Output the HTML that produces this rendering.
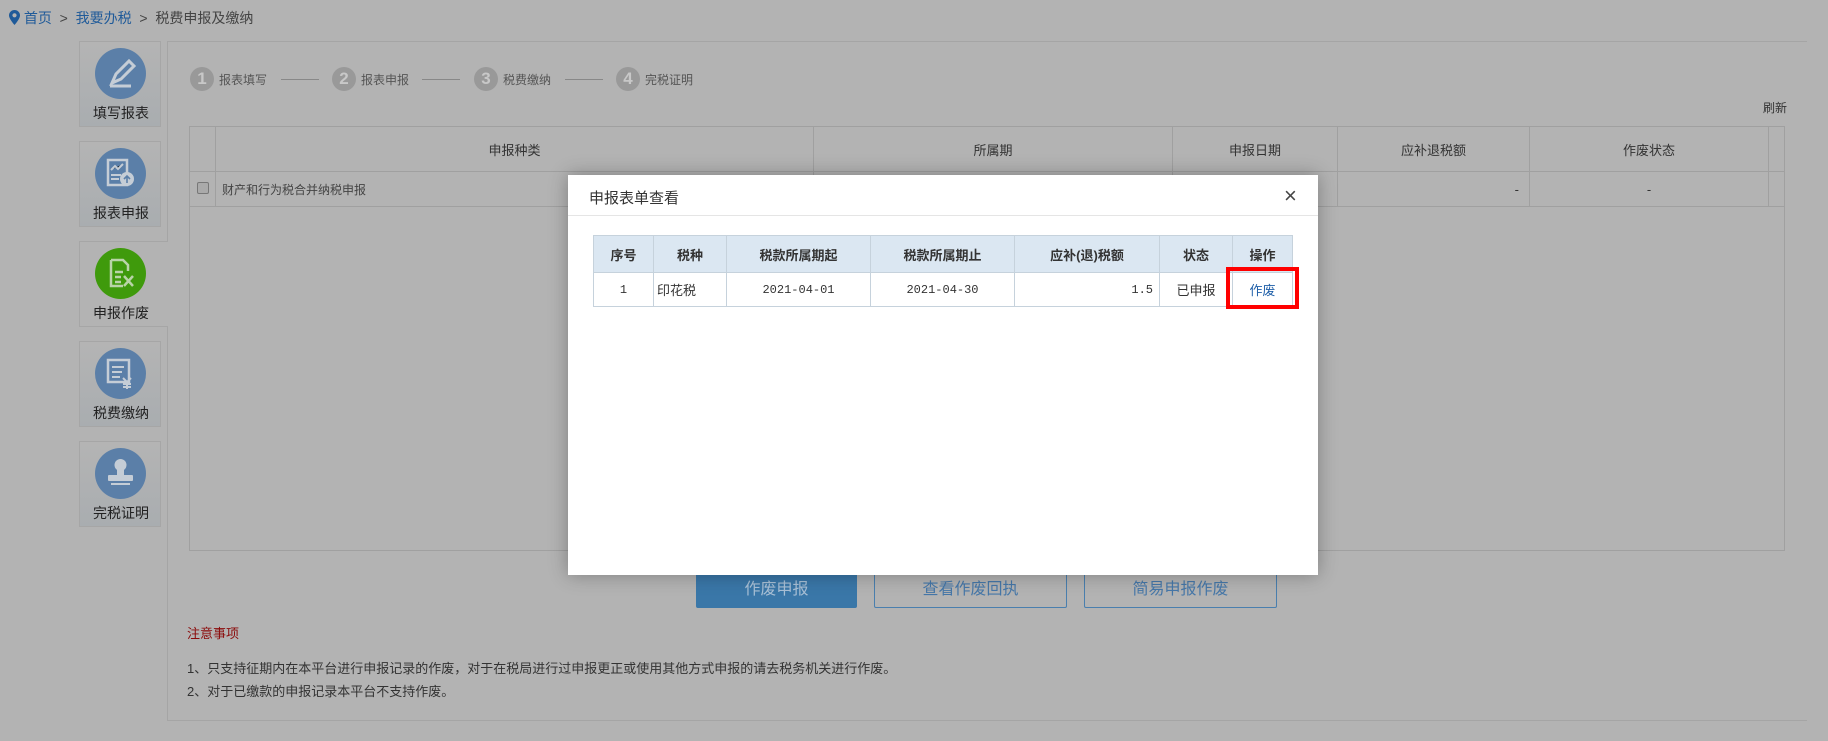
<!DOCTYPE html>
<html><head><meta charset="utf-8"><style>
*{margin:0;padding:0;box-sizing:border-box}
body{width:1828px;height:741px;background:#b3b3b3;font-family:"Liberation Sans","Noto Sans CJK SC",sans-serif;color:#333;position:relative;overflow:hidden;font-size:13px}
.a{position:absolute}
.crumb{top:8px;left:9px;font-size:14px;color:#444;white-space:nowrap}
.crumb b{font-weight:normal;color:#1f5a99}
.side{left:79px;width:82px;height:86px;border:1px solid #a6a6a6;background:linear-gradient(#b4b4b4,#a9adb0)}
.side.act{background:#b3b3b3;width:89px;border-right:none}
.side .c{position:absolute;left:15px;top:6px;width:51px;height:51px;border-radius:50%;background:#5b7fa8}
.side .t{position:absolute;left:0;width:82px;top:61px;text-align:center;font-size:14px;color:#222}
.panel{left:167px;top:41px;width:1640px;height:680px;border:1px solid #a5a5a5;border-right:none}
.step{top:67px;font-size:12px;color:#555;display:flex;align-items:center}
.step i{display:inline-block;width:24px;height:24px;border-radius:50%;background:#999;color:#c8c8c8;font-style:normal;font-weight:bold;font-size:17px;text-align:center;line-height:24px;margin-right:5px}
.line{top:79px;height:1px;background:#888;width:38px}
table{border-collapse:collapse}
.mt td{border:1px solid #a0a0a0;height:35px;text-align:center;font-size:13px}
.modal{left:568px;top:175px;width:750px;height:400px;background:#fff;box-shadow:0 0 18px rgba(0,0,0,.3)}
.it th,.it td{border:1px solid #c6d2dc;font-size:13px;text-align:center}
.it th{background:#dbe7f2;height:37px;color:#333}
.it td{height:34px;font-family:"Liberation Mono","Noto Sans CJK SC",monospace;font-size:12px}
.btn{top:571px;height:37px;font-size:16px;text-align:center;line-height:35px;border:1px solid #4a7fae;color:#4677a8;border-radius:2px}
</style></head><body>
<div class="a crumb"><svg width="11" height="15" viewBox="0 0 11 15" style="vertical-align:-2px"><path d="M5.5 0C2.5 0 0 2.4 0 5.4 0 9 5.5 15 5.5 15S11 9 11 5.4C11 2.4 8.5 0 5.5 0z" fill="#1f5a99"/><circle cx="5.5" cy="5.3" r="2.1" fill="#b3b3b3"/></svg> <b>首页</b> &nbsp;&gt;&nbsp; <b>我要办税</b> &nbsp;&gt;&nbsp; 税费申报及缴纳</div>

<div class="a panel"></div>
<div class="a side" style="top:41px"><div class="c"><svg width="51" height="51" viewBox="0 0 51 51"><path d="M17 35l4-9 13-13 5 5-13 13z" fill="none" stroke="#c5cdd6" stroke-width="3"/><path d="M15 38h21" stroke="#c5cdd6" stroke-width="3"/></svg></div><div class="t">填写报表</div></div>
<div class="a side" style="top:141px"><div class="c"><svg width="51" height="51" viewBox="0 0 51 51"><rect x="13" y="12" width="19" height="25" fill="none" stroke="#c5cdd6" stroke-width="2.5"/><path d="M16 22l4-4 3 3 5-5M16 27h10M16 31h8" stroke="#c5cdd6" stroke-width="2"/><circle cx="32" cy="31" r="7" fill="#c5cdd6"/><path d="M32 35v-7m-3 3l3-3 3 3" stroke="#5b7fa8" stroke-width="1.6" fill="none"/></svg></div><div class="t">报表申报</div></div>
<div class="a side act" style="top:241px"><div class="c" style="background:#3f9a0c"><svg width="51" height="51" viewBox="0 0 51 51"><path d="M16 12h12l5 5v6M16 12v26h12" fill="none" stroke="#b9d4a8" stroke-width="2.5"/><path d="M20 24h8M20 29h6M20 34h6M29 28l9 10M38 28l-9 10" stroke="#b9d4a8" stroke-width="2.5"/></svg></div><div class="t">申报作废</div></div>
<div class="a side" style="top:341px"><div class="c"><svg width="51" height="51" viewBox="0 0 51 51"><rect x="13" y="12" width="21" height="22" fill="none" stroke="#c5cdd6" stroke-width="2.5"/><path d="M17 19h12M17 24h10M17 29h8" stroke="#c5cdd6" stroke-width="2"/><path d="M28 30l4 4 4-4M32 34v7M28 36h8M28 39h8" stroke="#c5cdd6" stroke-width="2" fill="none"/></svg></div><div class="t">税费缴纳</div></div>
<div class="a side" style="top:441px"><div class="c"><svg width="51" height="51" viewBox="0 0 51 51"><circle cx="25.5" cy="17" r="6" fill="#c5cdd6"/><rect x="22" y="21" width="7" height="6" fill="#c5cdd6"/><rect x="13" y="27" width="25" height="6" rx="1" fill="#c5cdd6"/><rect x="16" y="35" width="19" height="2" fill="#c5cdd6"/></svg></div><div class="t">完税证明</div></div>

<div class="a step" style="left:190px"><i>1</i>报表填写</div><div class="a line" style="left:281px"></div>
<div class="a step" style="left:332px"><i>2</i>报表申报</div><div class="a line" style="left:422px"></div>
<div class="a step" style="left:474px"><i>3</i>税费缴纳</div><div class="a line" style="left:565px"></div>
<div class="a step" style="left:616px"><i>4</i>完税证明</div>
<div class="a" style="left:1763px;top:99px;font-size:12px;color:#333">刷新</div>

<div class="a" style="left:189px;top:126px;width:1596px;height:425px;border:1px solid #a0a0a0"></div>
<table class="a mt" style="left:189px;top:126px;width:1596px">
<tr style="height:45px"><td style="width:26px"></td><td style="width:598px">申报种类</td><td style="width:359px">所属期</td><td style="width:165px">申报日期</td><td style="width:192px">应补退税额</td><td style="width:239px">作废状态</td><td></td></tr>
<tr><td><span style="display:inline-block;width:12px;height:12px;border:1px solid #777;border-radius:2px;background:#aaa"></span></td><td style="text-align:left;padding-left:6px;font-size:12px;color:#444">财产和行为税合并纳税申报</td><td></td><td></td><td style="text-align:right;padding-right:10px">-</td><td>-</td><td></td></tr>
</table>

<div class="a btn" style="left:696px;width:161px;background:#3a77a8;color:#a9c0d6;border-color:#3a77a8">作废申报</div>
<div class="a btn" style="left:874px;width:193px">查看作废回执</div>
<div class="a btn" style="left:1084px;width:193px">简易申报作废</div>

<div class="a" style="left:187px;top:623px;font-size:13px;color:#8b0a0a">注意事项</div>
<div class="a" style="left:187px;top:658px;font-size:13px;color:#333">1、只支持征期内在本平台进行申报记录的作废，对于在税局进行过申报更正或使用其他方式申报的请去税务机关进行作废。</div>
<div class="a" style="left:187px;top:681px;font-size:13px;color:#333">2、对于已缴款的申报记录本平台不支持作废。</div>

<div class="a modal">
<div class="a" style="left:21px;top:12px;font-size:15px;color:#333">申报表单查看</div>
<div class="a" style="left:716px;top:8px;font-size:22px;color:#444;font-weight:300">×</div>
<div class="a" style="left:0;top:40px;width:750px;height:1px;background:#e5e5e5"></div>
<table class="a it" style="left:25px;top:60px;width:700px">
<tr><th style="width:60px">序号</th><th style="width:73px">税种</th><th style="width:144px">税款所属期起</th><th style="width:144px">税款所属期止</th><th style="width:145px">应补(退)税额</th><th style="width:73px">状态</th><th>操作</th></tr>
<tr><td>1</td><td style="text-align:left;padding-left:3px;font-family:'Liberation Sans','Noto Sans CJK SC',sans-serif;font-size:13px">印花税</td><td>2021-04-01</td><td>2021-04-30</td><td style="text-align:right;padding-right:6px">1.5</td><td style="font-family:'Liberation Sans','Noto Sans CJK SC',sans-serif;font-size:13px">已申报</td><td style="color:#1f5fa8;font-family:'Liberation Sans','Noto Sans CJK SC',sans-serif;font-size:13px">作废</td></tr>
</table>
<div class="a" style="left:658px;top:92px;width:73px;height:42px;border:4px solid #f00"></div>
</div>
</body></html>
